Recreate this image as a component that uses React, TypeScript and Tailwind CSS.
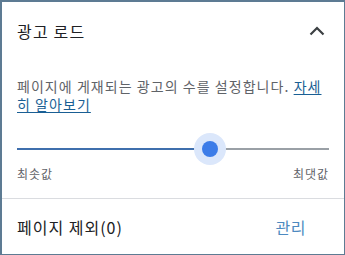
import React from "react";

export default function App() {
  const pct = 61.9;
  return (
    <div
      className="w-[345px] h-[255px] bg-white border-t-2 border-l-2 border-r border-b border-[#5d7b93] flex flex-col"
      style={{ fontFamily: '"Noto Sans CJK KR", "Noto Sans", sans-serif' }}
    >
      <div className="h-[58px] flex items-center justify-between pl-[15px] pr-[19px]">
        <span className="text-[16px] text-[#202124] leading-none tracking-[1.2px]">광고 로드</span>
        <svg width="16" height="10" viewBox="0 0 16 10" fill="none">
          <path d="M1.5 8.5 L8 2 L14.5 8.5" stroke="#3c4043" strokeWidth="2.2" />
        </svg>
      </div>
      <p className="mt-[17px] px-[15px] text-[14px] leading-[18px] tracking-[1.05px] text-[#5f6368]">
        페이지에 게재되는 광고의 수를 설정합니다.{" "}
        <a className="text-[#1a5f94] underline underline-offset-2">
          자세
          <br />
          히 알아보기
        </a>
      </p>
      <div className="mt-[20px] px-[15px]">
        <div className="relative h-[32px]">
          <div className="absolute left-0 right-0 top-[15px] h-[2px] bg-[#9aa0a6]" />
          <div
            className="absolute left-0 top-[15px] h-[2px] bg-[#3f6fad]"
            style={{ width: `${pct}%` }}
          />
          <div
            className="absolute top-0 w-[32px] h-[32px] -ml-[16px] rounded-full bg-[#dbe7fb] flex items-center justify-center"
            style={{ left: `${pct}%` }}
          >
            <div className="w-[16px] h-[16px] rounded-full bg-[#3c7ce8]" />
          </div>
        </div>
      </div>
      <div className="mt-[1px] px-[15px] flex justify-between text-[12px] leading-[16px] tracking-[1px] text-[#5f6368]">
        <span>최솟값</span>
        <span>최댓값</span>
      </div>
      <div className="mt-[16px] h-px bg-[#dadce0]" />
      <div className="flex-1 flex items-center justify-between pl-[15px] pr-[38px]">
        <span className="text-[16px] text-[#202124] leading-none tracking-[1px]">페이지 제외(0)</span>
        <span className="text-[16px] text-[#4d8ac0] leading-none tracking-[0.5px]">관리</span>
      </div>
    </div>
  );
}
